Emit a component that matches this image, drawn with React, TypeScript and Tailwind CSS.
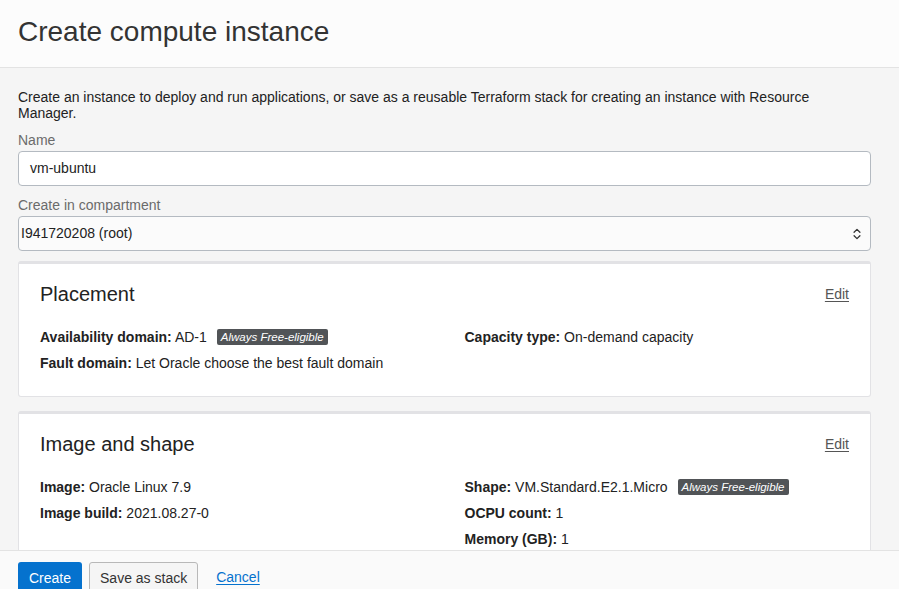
import { ChevronsUpDown } from 'lucide-react';

const font = { fontFamily: '"Liberation Sans", Arial, sans-serif' };

function Badge() {
  return (
    <span className="ml-[10px] inline-block h-[16px] rounded-[2px] bg-[#515457] px-[4px] text-[11.5px] leading-[16px] italic text-white align-[1px]">
      Always Free-eligible
    </span>
  );
}

function Field({ label, value, badge }: { label: string; value: string; badge?: boolean }) {
  return (
    <div className="h-[26px] text-[14px] leading-[26px] text-[#222]">
      <span className="font-bold">{label}:</span> {value}
      {badge && <Badge />}
    </div>
  );
}

interface CardProps {
  title: string;
  left: { label: string; value: string; badge?: boolean }[];
  right: { label: string; value: string; badge?: boolean }[];
}

function Card({ title, left, right }: CardProps) {
  return (
    <div className="rounded-[3px] border border-t-[3px] border-[#e2e2e5] bg-white px-[21px] pt-[17px] pb-[20px]">
      <div className="flex items-center justify-between">
        <h2 className="text-[20px] leading-[26px] text-[#222]">{title}</h2>
        <a className="text-[14px] text-[#555] underline underline-offset-2">Edit</a>
      </div>
      <div className="mt-[17px] grid grid-cols-2 gap-x-[20px]">
        <div>
          {left.map((f) => (
            <Field key={f.label} {...f} />
          ))}
        </div>
        <div className="pl-[10px]">
          {right.map((f) => (
            <Field key={f.label} {...f} />
          ))}
        </div>
      </div>
    </div>
  );
}

export default function App() {
  return (
    <div className="flex h-[589px] w-[899px] flex-col overflow-hidden bg-[#f5f5f5]" style={font}>
      <header className="h-[68px] shrink-0 border-b border-[#e3e3e3] bg-[#fcfcfc] px-[18px] pt-[14px]">
        <h1 className="text-[28px] leading-[36px] text-[#333]">Create compute instance</h1>
      </header>

      <main className="flex-1 overflow-hidden pl-[18px] pr-[28px] pt-[21px]">
        <p className="text-[14px] leading-[16px] text-[#222]">
          Create an instance to deploy and run applications, or save as a reusable Terraform stack for creating an instance with Resource Manager.
        </p>

        <label className="mt-[11px] block text-[14px] leading-[16px] text-[#6b6b6b]">Name</label>
        <div className="mt-[3px] flex h-[35px] items-center rounded-[4px] border border-[#b4bac1] bg-white px-[11px] text-[14px] text-[#222]">
          vm-ubuntu
        </div>

        <label className="mt-[11px] block text-[14px] leading-[16px] text-[#6b6b6b]">Create in compartment</label>
        <div className="mt-[3px] flex h-[35px] items-center justify-between rounded-[4px] border border-[#b4bac1] bg-[#fbfbfb] pl-[2px] pr-[6px] text-[14px] text-[#222]">
          <span>I941720208 (root)</span>
          <ChevronsUpDown size={14} strokeWidth={2.2} className="text-[#333]" />
        </div>

        <div className="mt-[10px]">
          <Card
            title="Placement"
            left={[
              { label: 'Availability domain', value: 'AD-1', badge: true },
              { label: 'Fault domain', value: 'Let Oracle choose the best fault domain' },
            ]}
            right={[{ label: 'Capacity type', value: 'On-demand capacity' }]}
          />
        </div>

        <div className="mt-[14px]">
          <Card
            title="Image and shape"
            left={[
              { label: 'Image', value: 'Oracle Linux 7.9' },
              { label: 'Image build', value: '2021.08.27-0' },
            ]}
            right={[
              { label: 'Shape', value: 'VM.Standard.E2.1.Micro', badge: true },
              { label: 'OCPU count', value: '1' },
              { label: 'Memory (GB)', value: '1' },
            ]}
          />
        </div>
      </main>

      <footer className="flex h-[39px] shrink-0 items-start gap-[7px] border-t border-[#e3e3e3] bg-[#fafafa] px-[18px] pt-[11px]">
        <button className="h-[32px] rounded-[3px] bg-[#0572ce] px-[11px] text-[14px] text-white">Create</button>
        <button className="h-[32px] rounded-[3px] border border-[#b8b8b8] bg-[#f5f5f5] px-[10px] text-[14px] text-[#333]">
          Save as stack
        </button>
        <a className="ml-[11px] pt-[5px] text-[14px] text-[#0572ce] underline underline-offset-2">Cancel</a>
      </footer>
    </div>
  );
}
